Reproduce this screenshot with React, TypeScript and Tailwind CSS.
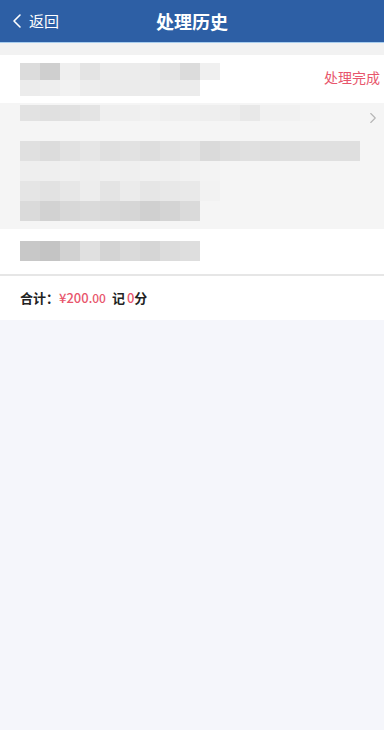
import { ChevronLeft, ChevronRight } from 'lucide-react'

// blurred placeholder rows, one class per 20px cell
const Mosaic = ({ cells, h }: { cells: string[]; h: string }) => (
  <div className={`flex ${h}`}>
    {cells.map((c, i) => (
      <div key={i} className={`w-[20px] ${c}`} />
    ))}
  </div>
)

export default function App() {
  return (
    <div
      className="min-h-[730px] bg-[#f5f6fb] text-[#222]"
      style={{ fontFamily: '"Noto Sans CJK SC", "Noto Sans", sans-serif' }}
    >
      {/* Header */}
      <div className="relative flex h-[43px] items-center justify-center bg-[#2d5fa5] border-b border-[#a8cdee]">
        <div className="absolute left-[5px] top-0 flex h-full items-center text-white">
          <ChevronLeft className="h-[28px] w-[24px]" strokeWidth={1.6} />
          <span className="ml-[0px] text-[15px]">返回</span>
        </div>
        <h1 className="text-[18px] font-bold text-white">处理历史</h1>
      </div>

      <div className="h-[12px] bg-[#f2f2f2]" />

      {/* Record card */}
      <div className="bg-white">
        <div className="relative px-[20px] pt-[8px] pb-[7px]">
          <Mosaic
            h="h-[17px]"
            cells={[
              'bg-[#dcdcdc]', 'bg-[#cfcfcf]', 'bg-[#efefef]', 'bg-[#e4e4e4]', 'bg-[#ececec]',
              'bg-[#ececec]', 'bg-[#ebebeb]', 'bg-[#e6e6e6]', 'bg-[#dcdcdc]', 'bg-[#f0f0f0]',
            ]}
          />
          <Mosaic
            h="h-[16px]"
            cells={[
              'bg-[#ececec]', 'bg-[#eeeeee]', 'bg-[#f2f2f2]', 'bg-[#ededed]', 'bg-[#ebebeb]',
              'bg-[#ebebeb]', 'bg-[#ececec]', 'bg-[#ebebeb]', 'bg-[#ececec]',
            ]}
          />
          <span className="absolute right-[4px] top-[12px] text-[14px] text-[#e8566c]">处理完成</span>
        </div>

        <div className="relative bg-[#f5f5f5] px-[20px] pt-[2px] pb-[8px]">
          <Mosaic
            h="h-[16px]"
            cells={[
              'bg-[#e2e2e2]', 'bg-[#e0e0e0]', 'bg-[#e1e1e1]', 'bg-[#e4e4e4]', 'bg-[#efefef]',
              'bg-[#efefef]', 'bg-[#f1f1f1]', 'bg-[#efefef]', 'bg-[#efefef]', 'bg-[#eeeeee]',
              'bg-[#ededed]', 'bg-[#e8e8e8]', 'bg-[#f1f1f1]', 'bg-[#f1f1f1]', 'bg-[#f3f3f3]',
            ]}
          />
          <ChevronRight className="absolute right-[2px] top-[6px] h-[18px] w-[18px] text-[#b5b5b5]" strokeWidth={1.5} />
          <div className="mt-[20px]">
            <Mosaic
              h="h-[20px]"
              cells={[
                'bg-[#e0e0e0]', 'bg-[#dcdcdc]', 'bg-[#e2e2e2]', 'bg-[#e6e6e6]', 'bg-[#e0e0e0]',
                'bg-[#e2e2e2]', 'bg-[#dedede]', 'bg-[#e2e2e2]', 'bg-[#e4e4e4]', 'bg-[#dadada]',
                'bg-[#dedede]', 'bg-[#e0e0e0]', 'bg-[#dedede]', 'bg-[#dfdfdf]', 'bg-[#e0e0e0]',
                'bg-[#e0e0e0]', 'bg-[#dfdfdf]',
              ]}
            />
            <Mosaic
              h="h-[20px]"
              cells={[
                'bg-[#eeeeee]', 'bg-[#efefef]', 'bg-[#f0f0f0]', 'bg-[#eeeeee]', 'bg-[#f0f0f0]',
                'bg-[#efefef]', 'bg-[#f1f1f1]', 'bg-[#f0f0f0]', 'bg-[#f2f2f2]', 'bg-[#f3f3f3]',
              ]}
            />
            <Mosaic
              h="h-[20px]"
              cells={[
                'bg-[#e5e5e5]', 'bg-[#e2e2e2]', 'bg-[#e7e7e7]', 'bg-[#ededed]', 'bg-[#e4e4e4]',
                'bg-[#ebebeb]', 'bg-[#e6e6e6]', 'bg-[#e8e8e8]', 'bg-[#e9e9e9]', 'bg-[#f2f2f2]',
              ]}
            />
            <Mosaic
              h="h-[20px]"
              cells={[
                'bg-[#dadada]', 'bg-[#d2d2d2]', 'bg-[#d8d8d8]', 'bg-[#dadada]', 'bg-[#d8d8d8]',
                'bg-[#d6d6d6]', 'bg-[#d0d0d0]', 'bg-[#d4d4d4]', 'bg-[#dadada]',
              ]}
            />
          </div>
        </div>

        <div className="px-[20px] pt-[12px] pb-[13px] border-b-2 border-[#e6e6e6]">
          <Mosaic
            h="h-[20px]"
            cells={[
              'bg-[#c8c8c8]', 'bg-[#c4c4c4]', 'bg-[#d2d2d2]', 'bg-[#e0e0e0]', 'bg-[#d4d4d4]',
              'bg-[#dadada]', 'bg-[#d6d6d6]', 'bg-[#dcdcdc]', 'bg-[#dedede]',
            ]}
          />
        </div>

        {/* Total */}
        <div className="flex h-[44px] items-center px-[20px] text-[13px] font-bold">
          <span>合计：</span>
          <span className="font-medium text-[#e8566c]">
            ¥200<span className="text-[12px]">.00</span>
          </span>
          <span className="ml-[6px]">记</span>
          <span className="ml-[2px] font-medium text-[#e8566c]">0</span>
          <span>分</span>
        </div>
      </div>
    </div>
  )
}
